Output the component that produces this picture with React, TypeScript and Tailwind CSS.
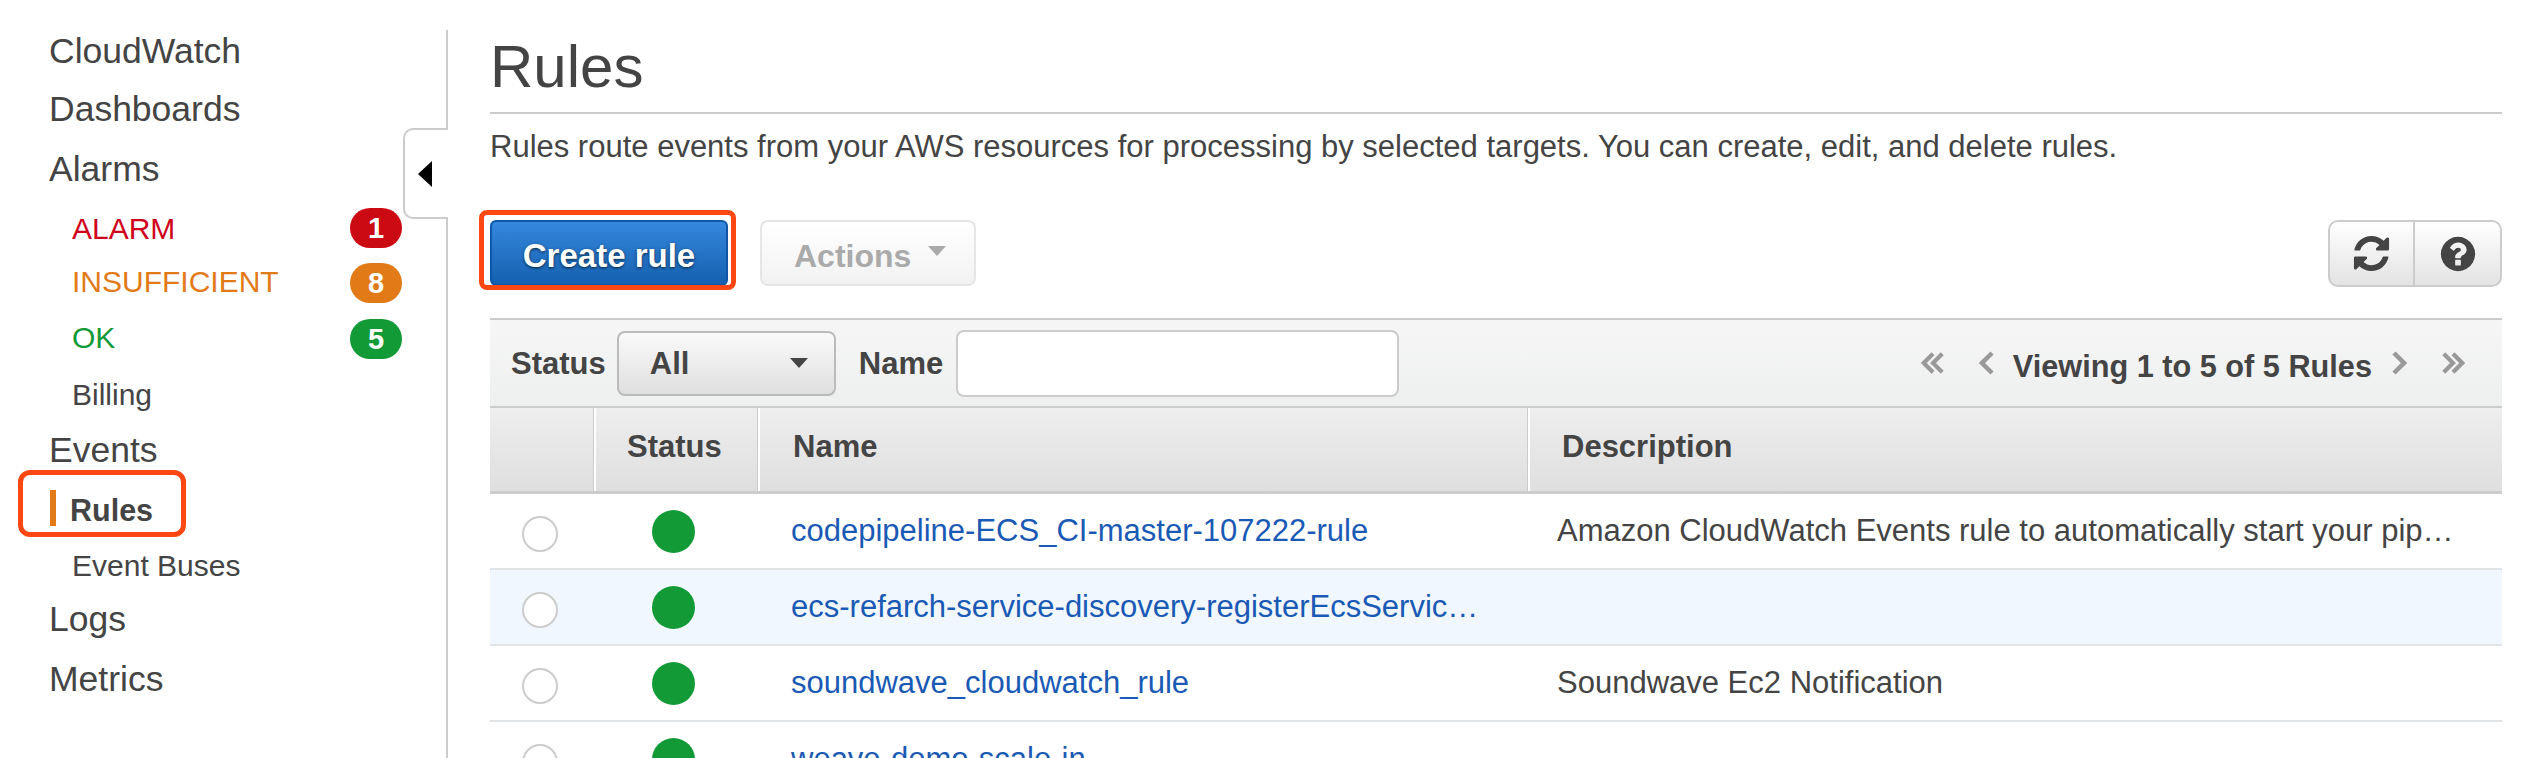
function NavTop({ label, cls }: { label: string; cls: string }) {
  return <div className={`pl-[49px] text-[35.5px] text-[#444] ${cls}`}>{label}</div>;
}

function NavSub({ label, cls, color, badge, badgeColor, labelCls }: { label: string; cls: string; color: string; badge?: string; badgeColor?: string; labelCls?: string }) {
  return (
    <div className={`flex items-center justify-between pl-[72px] text-[30px] ${cls} ${color}`}>
      <span className={labelCls}>{label}</span>
      {badge && (
        <span className={`flex h-[40px] w-[52px] items-center justify-center rounded-[20px] text-[29px] font-bold leading-none text-white ${badgeColor}`}>
          {badge}
        </span>
      )}
    </div>
  );
}

function Chevron({ dir, double }: { dir: "left" | "right"; double?: boolean }) {
  const pts = dir === "left" ? ["13,2 3,12 13,22", "23,2 13,12 23,22"] : ["3,2 13,12 3,22", "13,2 23,12 13,22"];
  return (
    <svg width={double ? 24 : 16} height="24" viewBox={double ? "0 0 26 24" : "0 0 16 24"} fill="none" stroke="#999" strokeWidth="4.5">
      <polyline points={pts[0]} />
      {double && <polyline points={pts[1]} />}
    </svg>
  );
}

function RefreshIcon() {
  return (
    <svg width="41" height="41" viewBox="0 0 1792 1792" fill="#444">
      <path d="M1639 1056q0 5-1 7-64 268-268 434.5t-478 166.5q-146 0-282.5-55t-243.5-157l-129 129q-19 19-45 19t-45-19-19-45v-448q0-26 19-45t45-19h448q26 0 45 19t19 45-19 45l-137 137q71 66 161 102t187 36q134 0 250-65t186-179q11-17 53-117 8-23 30-23h192q13 0 22.5 9.5t9.5 22.5zm25-800v448q0 26-19 45t-45 19h-448q-26 0-45-19t-19-45 19-45l138-138q-148-137-349-137-134 0-250 65t-186 179q-11 17-53 117-8 23-30 23h-199q-13 0-22.5-9.5t-9.5-22.5v-7q65-268 270-434.5t480-166.5q146 0 284 55.5t245 156.5l130-129q19-19 45-19t45 19 19 45z" />
    </svg>
  );
}

function HelpIcon() {
  return (
    <svg width="40" height="40" viewBox="0 0 1792 1792" fill="#444">
      <path d="M1024 1376v-192q0-14-9-23t-23-9h-192q-14 0-23 9t-9 23v192q0 14 9 23t23 9h192q14 0 23-9t9-23zm256-672q0-88-55.5-163t-138.5-116-170-41q-243 0-371 213-15 24 8 42l132 100q7 6 19 6 16 0 25-12 53-68 86-92 34-24 86-24 48 0 85.5 26t37.5 59q0 38-20 61t-68 45q-63 28-115.5 86.5t-52.5 125.5v36q0 14 9 23t23 9h192q14 0 23-9t9-23q0-19 21.5-49.5t54.5-49.5q32-18 49-28.5t46-35 44.5-48 28-60.5 12.5-81zm384 192q0 209-103 385.5t-279.5 279.5-385.5 103-385.5-103-279.5-279.5-103-385.5 103-385.5 279.5-279.5 385.5-103 385.5 103 279.5 279.5 103 385.5z" />
    </svg>
  );
}

function Cols({ children, cls }: { children: React.ReactNode; cls: string }) {
  return <div className={`grid grid-cols-[103px_164px_770px_975px] ${cls}`}>{children}</div>;
}

function Row({ name, desc, cls }: { name: string; desc?: string; cls?: string }) {
  return (
    <Cols cls={`h-[76px] shrink-0 border-b-2 border-[#e1e4e6] items-center text-[31px] ${cls ?? "bg-white"}`}>
      <div className="flex justify-center pr-[3px]">
        <span className="mt-[6px] h-[36px] w-[36px] rounded-full border-2 border-[#ccc] bg-white" />
      </div>
      <div className="flex justify-center pr-[4px]">
        <span className="h-[43px] w-[43px] rounded-full bg-[#129a37]" />
      </div>
      <a className="truncate pl-[34px] pr-[38px] text-[#1a5ab5]">{name}</a>
      <div className="truncate pl-[30px] pr-[41px] text-[#444]">{desc}</div>
    </Cols>
  );
}

export default function App() {
  return (
    <div className="flex h-[758px] w-[2544px] overflow-hidden bg-white font-['Liberation_Sans',Arial,sans-serif] text-[#444]">
      <aside className="w-[446px] shrink-0 pt-[22px] pr-[44px]">
        <NavTop label="CloudWatch" cls="leading-[58px]" />
        <NavTop label="Dashboards" cls="leading-[58px]" />
        <NavTop label="Alarms" cls="leading-[62px]" />
        <NavSub label="ALARM" cls="h-[56px]" color="text-[#d0021b]" badge="1" badgeColor="bg-[#cc0a14]" />
        <NavSub label="INSUFFICIENT" cls="h-[54px]" color="text-[#e27a18]" badge="8" badgeColor="bg-[#e27a18]" labelCls="mb-[3px]" />
        <NavSub label="OK" cls="h-[58px]" color="text-[#129a37]" badge="5" badgeColor="bg-[#129a37]" labelCls="mb-[3px]" />
        <NavSub label="Billing" cls="h-[56px]" color="text-[#444]" labelCls="mb-[3px]" />
        <NavTop label="Events" cls="leading-[52px]" />
        <div className="relative flex h-[64px] items-center pl-[50px]">
          <span className="h-[36px] w-[6px] bg-[#e27a18]" />
          <span className="ml-[14px] mt-[5px] text-[30.5px] font-bold text-[#444]">Rules</span>
          <span className="absolute left-[18px] top-[-6px] h-[67px] w-[168px] rounded-[12px] border-[5px] border-[#ff4713]" />
        </div>
        <NavSub label="Event Buses" cls="h-[50px]" color="text-[#444]" />
        <NavTop label="Logs" cls="leading-[58px]" />
        <NavTop label="Metrics" cls="leading-[62px]" />
        <div className="mt-[33px] pl-[49px] text-[35.5px] leading-[58px] tracking-[2px] text-[#999]">Favorites</div>
      </aside>

      <div className="relative mt-[30px] w-[2px] shrink-0 bg-[#ccc]">
        <div className="absolute right-0 top-[98px] flex h-[91px] w-[45px] items-center rounded-l-[10px] border-2 border-r-0 border-[#ccc] bg-white pl-[13px]">
          <span className="h-0 w-0 border-y-[13px] border-r-[14px] border-y-transparent border-r-black" />
        </div>
      </div>

      <main className="ml-[42px] w-[2012px] shrink-0">
        <div className="border-b-2 border-[#ccc] pt-[37px] pb-[15px]">
          <h1 className="text-[60px] leading-[60px] font-normal text-[#444]">Rules</h1>
        </div>
        <p className="mt-[13px] text-[31px] leading-[40px] text-[#444]">
          Rules route events from your AWS resources for processing by selected targets. You can create, edit, and delete rules.
        </p>

        <div className="mt-[53px] flex items-start">
          <div className="relative">
            <button className="h-[66px] w-[238px] rounded-[6px] border-2 border-[#0f56a6] bg-linear-to-b from-[#3488de] to-[#1560b0] pt-[5px] text-[33px] font-bold text-white [text-shadow:0_1px_3px_rgba(0,0,0,0.7)]">
              Create rule
            </button>
            <span className="absolute left-[-11px] top-[-10px] h-[80px] w-[257px] rounded-[8px] border-[5px] border-[#ff4713]" />
          </div>
          <button className="ml-[32px] flex h-[66px] w-[216px] items-center rounded-[8px] border-2 border-[#e6e6e6] bg-linear-to-b from-white to-[#f2f2f2] pl-[32px] text-[32px] font-bold text-[#aaa]">
            <span className="mt-[5px]">Actions</span>
            <span className="mb-[4px] ml-[17px] h-0 w-0 border-x-[9px] border-t-[10px] border-x-transparent border-t-[#aaa]" />
          </button>
          <div className="ml-auto flex h-[67px] w-[174px] rounded-[10px] border-2 border-[#ccc] bg-linear-to-b from-white to-[#e3e3e3]">
            <div className="flex w-[85px] items-center justify-center border-r-2 border-[#ccc]">
              <RefreshIcon />
            </div>
            <div className="flex flex-1 items-center justify-center">
              <HelpIcon />
            </div>
          </div>
        </div>

        <div className="mt-[31px] flex h-[90px] items-center border-y-2 border-[#ccc] bg-linear-to-b from-[#f6f6f6] to-[#eeefef] pl-[21px] pr-[37px] text-[31px] font-bold text-[#444]">
          <span className="mt-[2px]">Status</span>
          <div className="ml-[11px] flex h-[65px] w-[219px] items-center justify-between rounded-[8px] border-2 border-[#bbb] bg-linear-to-b from-[#fafafa] to-[#dfdfdf] pl-[31px] pr-[26px]">
            <span className="mt-[2px]">All</span>
            <span className="h-0 w-0 border-x-[9px] border-t-[10px] border-x-transparent border-t-[#444]" />
          </div>
          <span className="ml-[23px] mt-[2px]">Name</span>
          <input className="ml-[13px] h-[67px] w-[443px] rounded-[8px] border-2 border-[#ccc] bg-white" />
          <div className="ml-auto flex items-center">
            <Chevron dir="left" double />
            <span className="ml-[34px]"><Chevron dir="left" /></span>
            <span className="ml-[18px] mt-[8px] text-[30.7px]">Viewing 1 to 5 of 5 Rules</span>
            <span className="ml-[19px]"><Chevron dir="right" /></span>
            <span className="ml-[34px]"><Chevron dir="right" double /></span>
          </div>
        </div>

        <Cols cls="h-[86px] border-b-[3px] border-[#ccc] bg-linear-to-b from-[#eeeeee] to-[#dfdfdf] text-[31px] font-bold text-[#444]">
          <div />
          <div className="flex items-center border-l border-[#ccc] pb-[5px] pl-[33px] shadow-[inset_2px_0_0_#fff]">Status</div>
          <div className="flex items-center border-l border-[#ccc] pb-[5px] pl-[35px] shadow-[inset_2px_0_0_#fff]">Name</div>
          <div className="flex items-center border-l border-[#ccc] pb-[5px] pl-[34px] shadow-[inset_2px_0_0_#fff]">Description</div>
        </Cols>

        <Row name="codepipeline-ECS_CI-master-107222-rule" desc="Amazon CloudWatch Events rule to automatically start your pipeline when a change occurs" />
        <Row name="ecs-refarch-service-discovery-registerEcsServiceTaskRule" cls="bg-[#f0f7fe]" />
        <Row name="soundwave_cloudwatch_rule" desc="Soundwave Ec2 Notification" />
        <Row name="weave-demo-scale-in" />
      </main>
    </div>
  );
}
